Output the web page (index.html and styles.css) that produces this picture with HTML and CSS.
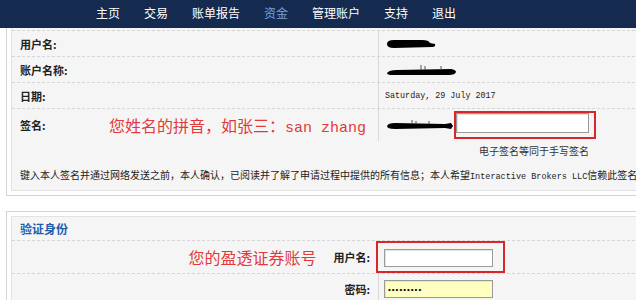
FILE: index.html
```html
<!DOCTYPE html>
<html lang="zh-CN">
<head>
    <meta charset="UTF-8">
    <meta name="viewport" content="width=device-width, initial-scale=1.0">
    <title>资金 - 电子签名</title>
    <link rel="stylesheet" href="styles.css">
</head>
<body>
    <div class="topnav">
        <a href="#">主页</a>
        <a href="#">交易</a>
        <a href="#">账单报告</a>
        <a href="#" class="active">资金</a>
        <a href="#">管理账户</a>
        <a href="#">支持</a>
        <a href="#">退出</a>
    </div>

    <div class="page">
        <div class="panel panel-first">
            <div class="panel-inner">
                <div class="row">
                    <div class="label">用户名:</div>
                    <div class="value">
                        <svg class="redact" width="52" height="12" viewBox="0 0 52 12"><path d="M2 6 Q2 2 9 2 L37 2 Q44 2 45 5 L50 6 Q51 9 47 9 L9 10 Q2 10 2 6 Z"/></svg>
                    </div>
                </div>
                <div class="row">
                    <div class="label">账户名称:</div>
                    <div class="value">
                        <svg class="redact" width="74" height="14" viewBox="0 0 74 14"><path d="M2 10 Q4 7 12 7 L66 6 Q71 7 71 9 Q70 12 64 12 L8 12 Q2 12 2 10 Z"/><path d="M36 2 L36 7 M40 3 L40 7 M56 3 L56 7" stroke="#555" stroke-width="1"/></svg>
                    </div>
                </div>
                <div class="row">
                    <div class="label">日期:</div>
                    <div class="value"><span class="date">Saturday, 29 July 2017</span></div>
                </div>
                <div class="row row-sign">
                    <div class="label">签名:<span class="hint">您姓名的拼音，如张三：<span class="en">san zhang</span></span></div>
                    <div class="value">
                        <svg class="redact" width="69" height="12" viewBox="0 0 69 12"><path d="M2 7 Q3 4 10 4 L60 5 L66 4 L68 7 L66 10 L60 9 L10 10 Q2 10 2 7 Z"/><path d="M27 1 L27 5 M31 2 L31 5 M44 2 L44 5" stroke="#555" stroke-width="1"/></svg>
                        <span class="mark mark-sign"><input class="field field-sign" type="text"></span>
                    </div>
                </div>
                <div class="foot">
                    <div class="note">电子签名等同于手写签名</div>
                    <p class="consent">键入本人签名并通过网络发送之前，本人确认，已阅读并了解了申请过程中提供的所有信息；本人希望<span class="en">Interactive Brokers LLC</span>信赖此签名作为本人的电子签名。</p>
                </div>
            </div>
        </div>

        <div class="panel">
            <div class="panel-inner">
                <div class="panel-title">验证身份</div>
                <div class="row row-login">
                    <div class="label"><span class="hint">您的盈透证券账号</span>用户名:</div>
                    <div class="value">
                        <span class="mark mark-login"><input class="field" type="text"></span>
                    </div>
                </div>
                <div class="row row-pwd">
                    <div class="label">密码:</div>
                    <div class="value"><input class="field field-pass" type="password" value="123456789"></div>
                </div>
            </div>
        </div>
    </div>
</body>
</html>
```

FILE: styles.css
```css
body {
    margin: 0;
    background: #fff;
    font-family: "Noto Sans CJK SC", sans-serif;
    color: #222;
    overflow: hidden;
}

.topnav {
    height: 28px;
    box-sizing: border-box;
    padding: 0 0 2px 96px;
    display: flex;
    align-items: center;
    gap: 24px;
    background: #152a4f;
    font-size: 12px;
    line-height: 1;
}
.topnav a {
    color: #fff;
    text-decoration: none;
}
.topnav a.active {
    color: #7aa3d6;
}

.page {
    width: 720px;
    padding-left: 6px;
}

.panel {
    border: 1px solid #d4d4d4;
    padding: 4px;
    background: #fff;
}
.panel-first {
    border-top: 0;
    padding-top: 0;
}
.panel + .panel {
    margin-top: 15px;
}
.panel-inner {
    border: 1px solid #e2e2e2;
    background: #f5f5f5;
}
.panel-first .panel-inner {
    border-top: 0;
    padding-top: 2px;
}

.row {
    display: grid;
    grid-template-columns: 366px 1fr;
    height: 25px;
    border-top: 1px dashed #d6d6d6;
}
.label {
    display: flex;
    align-items: center;
    padding-left: 8px;
    font-size: 11px;
    font-weight: bold;
}
.value {
    display: flex;
    align-items: center;
    padding-left: 6px;
    border-left: 1px solid #d9d9d9;
}
.date {
    font-family: "Liberation Mono", monospace;
    font-size: 8.4px;
    color: #222;
}

.hint {
    margin-left: auto;
    padding-right: 12px;
    color: #e23a3a;
    font-size: 16px;
    font-weight: normal;
}
.hint .en {
    font-family: "Liberation Mono", monospace;
    font-size: 15px;
}

.row-sign {
    height: 32px;
}

.mark {
    display: flex;
    border: 2px solid #d9262b;
}
.mark-sign {
    padding: 0 5px 4px 0;
}
.mark-login {
    padding: 6px 10px 4px 6px;
    margin-left: -2px;
}

.field {
    width: 109px;
    height: 18px;
    box-sizing: border-box;
    margin: 0;
    padding: 0 3px;
    border: 1px solid #9a9a9a;
    box-shadow: inset 1px 1px 0 #e2e2e2;
    background: #fff;
    font-size: 8px;
    letter-spacing: 1px;
}
.field-sign {
    width: 133px;
    height: 20px;
}
.field-pass {
    background: #ffffc2;
}

.foot {
    padding: 4px 0 7px 8px;
}
.note {
    margin-left: 459px;
    font-size: 10px;
    line-height: 12px;
    color: #333;
}
.consent {
    margin: 12px 0 0;
    font-size: 10px;
    line-height: 12px;
    white-space: nowrap;
}
.consent .en {
    font-family: "Liberation Mono", monospace;
    font-size: 8.5px;
}

.panel-title {
    height: 23px;
    display: flex;
    align-items: center;
    padding-left: 8px;
    color: #1d5fae;
    font-size: 12px;
    font-weight: bold;
}

.row-login {
    height: 32px;
}
.row-login .label {
    justify-content: flex-end;
    padding: 0 8px 0 0;
}
.row-login .hint {
    padding-right: 17px;
}
.row-login .value {
    border-left: 0;
    padding-left: 0;
}

.row-pwd {
    height: 30px;
}
.row-pwd .label {
    justify-content: flex-end;
    padding: 0 8px 0 0;
}
.row-pwd .value {
    align-items: flex-start;
    padding: 6px 0 0 5px;
}
```
